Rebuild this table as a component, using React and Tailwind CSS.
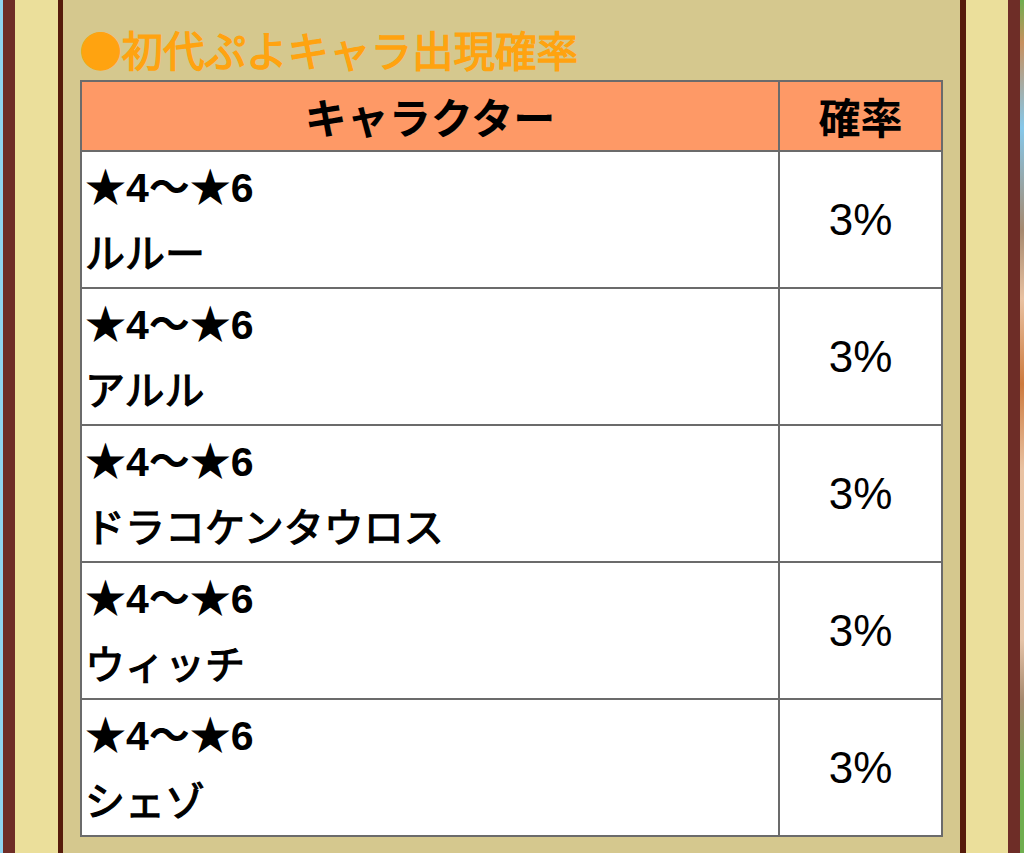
import React from 'react';

const ROWS = ['ルルー', 'アルル', 'ドラコケンタウロス', 'ウィッチ', 'シェゾ'];

const font = { fontFamily: '"Noto Sans CJK JP", "Noto Sans", sans-serif' };

const App = () => {
  return (
    <div className="flex h-[853px] w-[1024px] overflow-hidden bg-[#d5c88e]" style={font}>
      {/* left frame */}
      <div className="w-[3px] bg-[#8fd3f0]" />
      <div className="w-[12px] bg-[#6e2d27]" />
      <div className="w-[43px] bg-[#ebdf9b]" />
      <div className="w-[5px] bg-[#561b0b]" />

      {/* content */}
      <div className="w-[897px] bg-[#d5c88e] pl-[17px] pt-[24px]">
        <h2 className="text-[41.5px] leading-[50px] text-[#ffa310] [-webkit-text-stroke:1.3px_#ffa310] mb-[6px] whitespace-nowrap">
          ●初代ぷよキャラ出現確率
        </h2>
        <table className="w-[863px] border-collapse border-2 border-[#6b6b6b] bg-white text-black">
          <thead>
            <tr className="h-[70px] bg-[#fe9966]">
              <th className="w-[698px] border-2 border-[#6b6b6b] text-[42px] font-bold leading-none">キャラクター</th>
              <th className="border-2 border-[#6b6b6b] text-[42px] font-bold leading-none">確率</th>
            </tr>
          </thead>
          <tbody>
            {ROWS.map((name) => (
              <tr key={name} className="h-[137px]">
                <td className="border-2 border-[#6b6b6b] pl-[3px] align-middle text-[40px] leading-[63px] whitespace-nowrap">
                  <div className="text-[41px] font-bold font-['Liberation_Sans','Noto_Sans_CJK_JP',sans-serif]">★4〜★6</div>
                  <div className="[-webkit-text-stroke:1.2px_black]">{name}</div>
                </td>
                <td className="border-2 border-[#6b6b6b] text-center align-middle text-[44px] leading-none font-['Liberation_Sans',sans-serif]">
                  3%
                </td>
              </tr>
            ))}
          </tbody>
        </table>
      </div>

      {/* right frame */}
      <div className="w-[6px] bg-[#561b0b]" />
      <div className="w-[42px] bg-[#ebdf9b]" />
      <div className="w-[12px] bg-[#6e2d27]" />
      <div className="w-[4px] bg-[linear-gradient(to_bottom,#6fae4f_0%,#c7905f_5%,#86c8ea_15%,#a6896f_27%,#e9c2a2_35%,#cd7a3e_45%,#e9c2a2_55%,#e6c4a8_75%,#a6896f_82%,#6fae4f_92%,#6fae4f_100%)]" />
    </div>
  );
};

export default App;
